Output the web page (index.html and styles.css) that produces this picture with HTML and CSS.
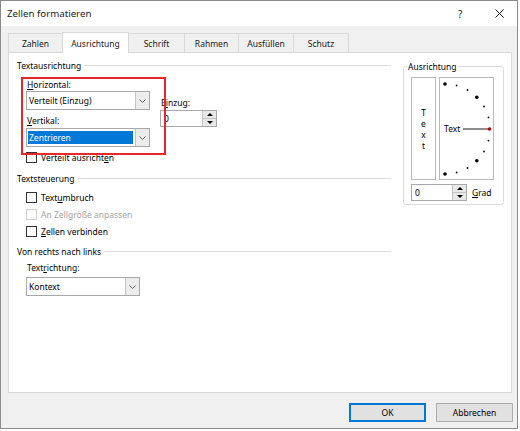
FILE: index.html
```html
<!DOCTYPE html>
<html lang="de">
<head>
<meta charset="utf-8">
<title>Zellen formatieren</title>
<link rel="stylesheet" href="styles.css">
</head>
<body>
<div class="window">
  <div class="titlebar">
    <span class="title">Zellen formatieren</span>
    <span class="help">?</span>
    <svg class="close" width="9" height="9" viewBox="0 0 9 9"><path d="M0.5 0.5 L8.5 8.5 M8.5 0.5 L0.5 8.5" stroke="#1a1a1a" stroke-width="1" fill="none"/></svg>
  </div>
  <div class="tabs">
    <div class="tab t-zahlen">Zahlen</div>
    <div class="tab t-ausr active">Ausrichtung</div>
    <div class="tab t-schrift">Schrift</div>
    <div class="tab t-rahmen">Rahmen</div>
    <div class="tab t-ausf">Ausfüllen</div>
    <div class="tab t-schutz">Schutz</div>
  </div>
  <div class="panel">
    <div class="leftcol">
      <div class="grouphead"><span>Textausrichtung</span><i class="rule"></i></div>
      <div class="fields">
        <div class="fieldcol">
          <div class="label first"><u>H</u>orizontal:</div>
          <div class="combo"><span class="value">Verteilt (Einzug)</span><span class="arrow"><svg width="7" height="4" viewBox="0 0 7 4"><path d="M0.5 0.5 L3.5 3.5 L6.5 0.5" stroke="#606060" fill="none"/></svg></span></div>
          <div class="label second"><u>V</u>ertikal:</div>
          <div class="combo low"><span class="value"><span class="sel">Zentrieren</span></span><span class="arrow"><svg width="7" height="4" viewBox="0 0 7 4"><path d="M0.5 0.5 L3.5 3.5 L6.5 0.5" stroke="#606060" fill="none"/></svg></span></div>
        </div>
        <div class="indentcol">
          <div class="label">E<u>i</u>nzug:</div>
          <div class="spin einzug"><span class="spinval">0</span><span class="spinbtns"><span class="sb"><i class="tri up"></i></span><span class="sb"><i class="tri down"></i></span></span></div>
        </div>
      </div>
      <div class="check c-verteilt"><span class="box"></span><span>Verteilt ausricht<u>e</u>n</span></div>
      <div class="grouphead g2"><span>Textsteuerung</span><i class="rule"></i></div>
      <div class="check c-umbruch"><span class="box"></span><span>Text<u>u</u>mbruch</span></div>
      <div class="check c-anpassen disabled"><span class="box"></span><span>An Zellgröße anpassen</span></div>
      <div class="check c-verbinden"><span class="box"></span><span><u>Z</u>ellen verbinden</span></div>
      <div class="grouphead g3"><span>Von rechts nach links</span><i class="rule"></i></div>
      <div class="label textrichtung">Text<u>r</u>ichtung:</div>
      <div class="combo kontext"><span class="value">Kontext</span><span class="arrow"><svg width="7" height="4" viewBox="0 0 7 4"><path d="M0.5 0.5 L3.5 3.5 L6.5 0.5" stroke="#606060" fill="none"/></svg></span></div>
      <div class="annot"></div>
    </div>
    <div class="rightcol">
      <div class="groupbox">
        <span class="grouplabel">Ausrichtung</span>
        <div class="orient">
          <div class="vtext"><span>T</span><span>e</span><span>x</span><span>t</span></div>
          <div class="dial">
            <svg width="53" height="101" viewBox="0 0 53 101">
              <line x1="23" y1="51" x2="48" y2="51" stroke="#8c8c8c" stroke-width="2"/>
              <text x="4" y="54" class="dialtext">Text</text>
              <circle cx="5" cy="6" r="1.8" fill="#000"/>
              <circle cx="16.6" cy="7.5" r="0.9" fill="#000"/>
              <circle cx="27.5" cy="12" r="0.9" fill="#000"/>
              <circle cx="36.8" cy="19.2" r="1.8" fill="#000"/>
              <circle cx="44" cy="28.5" r="0.9" fill="#000"/>
              <circle cx="48.5" cy="39.4" r="0.9" fill="#000"/>
              <circle cx="49.5" cy="51" r="1.8" fill="#c00000"/>
              <circle cx="48.5" cy="62.6" r="0.9" fill="#000"/>
              <circle cx="44" cy="73.5" r="0.9" fill="#000"/>
              <circle cx="36.8" cy="82.8" r="1.8" fill="#000"/>
              <circle cx="27.5" cy="90" r="0.9" fill="#000"/>
              <circle cx="16.6" cy="94.5" r="0.9" fill="#000"/>
              <circle cx="5" cy="96" r="1.8" fill="#000"/>
            </svg>
          </div>
        </div>
        <div class="gradrow">
          <div class="spin grad"><span class="spinval">0</span><span class="spinbtns"><span class="sb"><i class="tri up"></i></span><span class="sb"><i class="tri down"></i></span></span></div>
          <span><u>G</u>rad</span>
        </div>
      </div>
    </div>
  </div>
  <div class="buttons">
    <button class="btn default">OK</button>
    <button class="btn">Abbrechen</button>
  </div>
</div>
</body>
</html>
```
FILE: styles.css
```css
* { box-sizing: border-box; }
html, body { margin: 0; padding: 0; background: #ffffff; }
body {
  font-family: "Noto Sans", "Segoe UI", "DejaVu Sans", sans-serif;
  font-size: 8.5px;
  color: #000;
}
u { text-decoration: underline; text-underline-offset: 1px; }

.window {
  width: 518px;
  height: 429px;
  border: 1px solid #8a8a8a;
  background: #f0f0f0;
  display: flex;
  flex-direction: column;
}

/* title bar */
.titlebar {
  height: 25px;
  flex: none;
  background: #fff;
  display: flex;
  align-items: center;
  padding-left: 6px;
  padding-right: 13px;
}
.title { font-size: 9.7px; flex: 1; color: #1a1a1a; }
.help { font-size: 10px; width: 6px; margin-right: 31px; color: #1a1a1a; }
.close { display: block; }

/* tabs */
.tabs {
  display: flex;
  align-items: flex-end;
  height: 20px;
  margin: 6px 0 0 7px;
  flex: none;
}
.tab {
  height: 19px;
  border: 1px solid #d9d9d9;
  border-bottom: none;
  margin-right: -1px;
  display: flex;
  align-items: center;
  justify-content: center;
  background: #f0f0f0;
  color: #1a1a1a;
}
.tab.active {
  height: 21px;
  background: #fff;
  position: relative;
  z-index: 1;
  margin-bottom: -1px;
}
.t-zahlen { width: 55px; }
.t-ausr { width: 67px; }
.t-schrift { width: 57px; }
.t-rahmen { width: 55px; }
.t-ausf { width: 56px; }
.t-schutz { width: 56px; }

/* panel */
.panel {
  height: 341px;
  flex: none;
  margin: 0 5px 0 7px;
  background: #fff;
  border: 1px solid #d9d9d9;
  display: flex;
  gap: 12px;
  padding: 6px 0 0 8px;
}

.leftcol {
  width: 374px;
  position: relative;
  display: flex;
  flex-direction: column;
}
.grouphead {
  display: flex;
  align-items: center;
  height: 13px;
  line-height: 13px;
  flex: none;
}
.grouphead .rule {
  flex: 1;
  height: 0;
  border-top: 1px solid #dcdcdc;
  margin-left: 3px;
}
.g2 { margin-top: 8px; }
.g3 { margin-top: 7px; }

.fields {
  display: flex;
  padding-left: 9px;
  flex: none;
}
.fieldcol { width: 124px; display: flex; flex-direction: column; }
.label { height: 13px; line-height: 13px; padding-left: 1px; }
.label.first { margin-top: 6px; }
.label.second { margin-top: 4px; }
.combo.low { margin-top: 1px; }

.combo {
  width: 124px;
  height: 19px;
  border: 1px solid #a8a8a8;
  background: #fff;
  display: flex;
  flex: none;
}
.combo .value {
  flex: 1;
  padding: 1px 1px 1px 1px;
  display: flex;
  align-items: center;
}
.combo .value { padding-left: 2px; }
.combo .sel {
  display: flex;
  align-items: center;
  width: 100%;
  height: 13px;
  background: #0078d7;
  color: #fff;
  padding-left: 1px;
  margin-left: -1px;
}
.combo .arrow {
  width: 14px;
  border-left: 1px solid #c4c4c4;
  background: #ececec;
  display: flex;
  align-items: center;
  justify-content: center;
}
.combo .arrow svg { display: block; }

.indentcol {
  margin-left: 10px;
  padding-top: 24px;
  display: flex;
  flex-direction: column;
}
.indentcol .spin { margin-top: 1px; }

.spin {
  height: 17px;
  border: 1px solid #a8a8a8;
  background: #fff;
  display: flex;
}
.spin.einzug { width: 57px; }
.spin.grad { width: 56px; }
.spinval {
  flex: 1;
  line-height: 15px;
  padding-left: 3px;
}
.spinbtns {
  width: 14px;
  display: flex;
  flex-direction: column;
  border-left: 1px solid #c4c4c4;
}
.sb {
  flex: 1;
  display: flex;
  align-items: center;
  justify-content: center;
  background: #e8e8e8;
}
.sb + .sb { border-top: 1px solid #c4c4c4; }
.tri { display: block; width: 0; height: 0; border-left: 3px solid transparent; border-right: 3px solid transparent; }
.tri.up { border-bottom: 3px solid #000; }
.tri.down { border-top: 3px solid #000; }

.check {
  display: flex;
  align-items: center;
  gap: 4px;
  height: 13px;
  margin-left: 9px;
  flex: none;
}
.check .box {
  width: 11px;
  height: 11px;
  border: 1px solid #333;
  background: #fff;
}
.check.disabled { color: #a3a3a3; }
.check.disabled .box { border-color: #d0d0d0; }
.c-verteilt { margin-top: 4px; }
.c-umbruch { margin-top: 6px; }
.c-anpassen { margin-top: 4px; }
.c-verbinden { margin-top: 4px; }

.label.textrichtung { margin-left: 9px; margin-top: 3px; }
.combo.kontext { width: 114px; margin-left: 9px; margin-top: 3px; }

.annot {
  position: absolute;
  left: 4px;
  top: 18px;
  width: 145px;
  height: 78px;
  border: 2px solid #e8262b;
  pointer-events: none;
}

/* right group */
.rightcol { width: 101px; }
.groupbox {
  width: 101px;
  height: 139px;
  margin-top: 7px;
  border: 1px solid #dcdcdc;
  border-radius: 3px;
  position: relative;
  padding: 10px 0 0 7px;
}
.grouplabel {
  position: absolute;
  top: -7px;
  left: 3px;
  line-height: 13px;
  padding: 0 1px;
  background: #fff;
}
.orient { display: flex; gap: 3px; }
.vtext {
  width: 25px;
  height: 103px;
  border: 1px solid #b9b9b9;
  display: flex;
  flex-direction: column;
  align-items: center;
  justify-content: center;
  line-height: 11px;
}
.dial {
  width: 55px;
  height: 103px;
  border: 1px solid #b9b9b9;
}
.dial svg { display: block; }
.dialtext { font-family: "Noto Sans", sans-serif; font-size: 8.5px; fill: #000; }
.gradrow {
  display: flex;
  align-items: center;
  gap: 5px;
  margin-top: 4px;
}

/* buttons */
.buttons {
  display: flex;
  justify-content: flex-end;
  gap: 10px;
  margin-top: 10px;
  padding-right: 4px;
  flex: none;
}
.btn {
  width: 77px;
  height: 19px;
  border: 1px solid #adadad;
  background: #e1e1e1;
  font-family: inherit;
  font-size: 8.5px;
  color: #000;
  padding: 0;
}
.btn.default { border: 2px solid #0078d7; }
```
